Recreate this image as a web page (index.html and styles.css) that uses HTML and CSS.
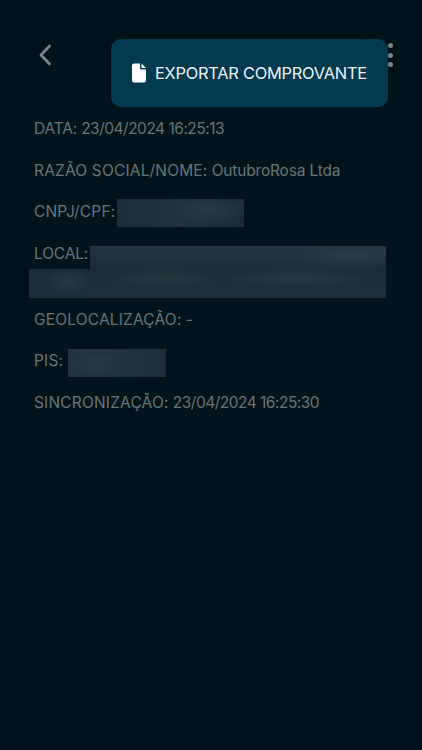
FILE: index.html
```html
<!DOCTYPE html>
<html lang="pt-BR">
<head>
<meta charset="utf-8">
<title>Comprovante</title>
<link rel="stylesheet" href="styles.css">
</head>
<body>
<div class="screen">
  <header class="topbar">
    <svg class="back" width="14" height="24" viewBox="0 0 14 24"><path d="M11.5 3 L3 12 L11.5 21" fill="none" stroke="#7b8388" stroke-width="2.8" stroke-linecap="round" stroke-linejoin="round"/></svg>
    <div class="dots"><i></i><i></i><i></i></div>
  </header>
  <div class="menu">
    <svg width="14" height="20" viewBox="0 0 14 20"><path d="M2 0.5 H8 V5 A1.5 1.5 0 0 0 9.5 6.5 H14 V17.5 A2 2 0 0 1 12 19.5 H2 A2 2 0 0 1 0 17.5 V2.5 A2 2 0 0 1 2 0.5 Z M9.5 0.5 L14 5 H10 A0.5 0.5 0 0 1 9.5 4.5 Z" fill="#fff"/></svg>
    <span>EXPORTAR COMPROVANTE</span>
  </div>
  <main class="details">
    <p class="row">DATA: <span class="num">23/04/2024 16:25:13</span></p>
    <p class="row"><span class="label">RAZÃO SOCIAL/NOME:</span> OutubroRosa Ltda</p>
    <div class="row inline"><span class="label">CNPJ/CPF:</span><div class="r-cnpj"></div></div>
    <div class="local">
      <span class="local-label">LOCAL:</span>
      <div class="r-local-left"></div>
      <div class="r-local-main"></div>
    </div>
    <p class="row"><span class="label">GEOLOCALIZAÇÃO:</span> -</p>
    <div class="row inline"><span class="label">PIS:</span><div class="r-pis"></div></div>
    <p class="row"><span class="label">SINCRONIZAÇÃO:</span> <span class="num">23/04/2024 16:25:30</span></p>
  </main>
</div>
</body>
</html>
```
FILE: styles.css
```css
* { box-sizing: border-box; }
html, body { margin: 0; padding: 0; }
body { background: #00131b; font-family: Inter, "Liberation Sans", sans-serif; }
.screen { position: relative; width: 422px; height: 750px; overflow: hidden; background: #00131b; }
.topbar { display: flex; justify-content: space-between; align-items: flex-start; padding: 43px 29px 0 38px; height: 119px; }
.back { display: block; }
.dots { display: flex; flex-direction: column; gap: 4.5px; }
.dots i { display: block; width: 5px; height: 5px; border-radius: 50%; background: #7e8589; }
.menu { position: absolute; left: 111px; top: 39px; width: 277px; height: 68px; border-radius: 10px; background: #023a50; display: flex; align-items: center; gap: 9px; padding-left: 21px; color: #eef3f5; font-size: 16.4px; letter-spacing: -0.25px; }
.details { padding-left: 34px; color: #67767c; font-size: 15.5px; letter-spacing: -0.18px; line-height: 20px; }
.label { letter-spacing: 0.17px; }
.num { letter-spacing: -0.5px; }
.row { margin: 0 0 21.6px; height: 20px; white-space: nowrap; }
.inline { display: flex; align-items: center; }
.r-cnpj { width: 127px; height: 28px; margin: 2px 0 0 2px; background: radial-gradient(ellipse 40px 14px at 72% 40%, #2b3b43, transparent), linear-gradient(90deg, #1d2d35 0%, #21313a 50%, #1c2c34 100%); }
.r-pis { width: 98px; height: 28px; margin: 4px 0 0 5px; background: radial-gradient(ellipse 30px 16px at 30% 50%, #2a3a42, transparent), linear-gradient(90deg, #22333b 0%, #1f2f37 100%); }
.local { display: grid; grid-template-columns: 61px 296px; grid-template-rows: 23px 29px; margin: 23.4px 0 12px -5px; }
.local-label { grid-column: 1; grid-row: 1; padding-left: 5px; margin-top: -2px; }
.r-local-left { grid-column: 1; grid-row: 2; background: radial-gradient(ellipse 24px 14px at 65% 45%, #283840, transparent), #1c2c34; }
.r-local-main { grid-column: 2; grid-row: 1 / span 2; background: radial-gradient(ellipse 60px 12px at 88% 18%, #2e3e46, transparent), radial-gradient(ellipse 70px 9px at 70% 62%, #2a3a42, transparent), radial-gradient(ellipse 55px 9px at 25% 62%, #28383f, transparent), linear-gradient(180deg, #25353d 0%, #1c2c34 48%, #1f2f37 100%); }
```
